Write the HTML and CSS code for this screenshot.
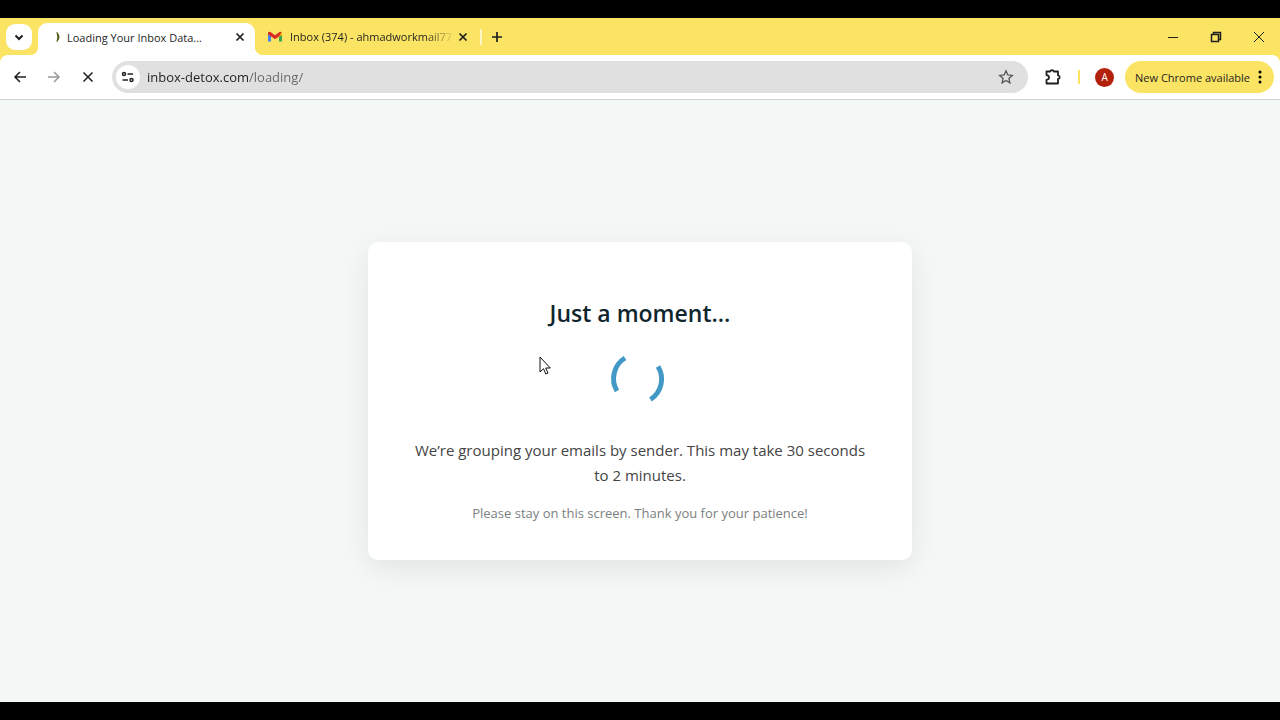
FILE: index.html
```html
<!DOCTYPE html>
<html lang="en">

<head>
    <meta charset="UTF-8">
    <meta name="viewport" content="width=device-width, initial-scale=1.0">
    <title>Loading Your Inbox Data...</title>
    <link rel="stylesheet" href="styles.css">
</head>

<body>
    <header class="browser">
        <div class="tab-strip">
            <button class="tab-search" aria-label="Search tabs">
                <svg width="10" height="10" viewBox="0 0 10 10"><path d="M1.5 3.5 5 7l3.500-3.500" class="line bold"/></svg>
            </button>

            <div class="tab active">
                <svg class="favicon" width="16" height="16" viewBox="0 0 16 16"><path d="M9 3.500Q13 8 9 12.500Q10.800 8 9 3.500Z" fill="#4d5a10" stroke="#4d5a10"/></svg>
                <span class="tab-title">Loading Your Inbox Data...</span>
                <button class="tab-close" aria-label="Close tab">
                    <svg width="10" height="10" viewBox="0 0 10 10"><path d="M1.500 1.500l7 7M8.500 1.500l-7 7" class="line close"/></svg>
                </button>
            </div>

            <div class="tab">
                <svg class="favicon gmail" width="14" height="12" viewBox="0 0 14 12">
                    <path d="M0 2v8.500h3V4z" fill="#4285f4"/>
                    <path d="M14 2v8.500h-3V4z" fill="#34a853"/>
                    <path d="M11 1.500 14 1v3l-3 2z" fill="#fbbc04"/>
                    <path d="M0 1.500Q1 .3 2.500 1L7 4.300 11.500 1Q13 .3 13.500 1.500L11 5.500 7 8.300 3 5.500 0 3.500z" fill="#d93025"/>
                </svg>
                <span class="tab-title faded">Inbox (374) - ahmadworkmail77</span>
                <button class="tab-close" aria-label="Close tab">
                    <svg width="10" height="10" viewBox="0 0 10 10"><path d="M1.500 1.500l7 7M8.500 1.500l-7 7" class="line close"/></svg>
                </button>
            </div>

            <span class="tab-divider"></span>
            <button class="new-tab" aria-label="New tab">
                <svg width="12" height="12" viewBox="0 0 12 12"><path d="M6 1v10M1 6h10" class="line close"/></svg>
            </button>

            <div class="window-controls">
                <button aria-label="Minimize"><svg width="12" height="12" viewBox="0 0 12 12"><path d="M1 6.500h10" class="line thin"/></svg></button>
                <button aria-label="Restore"><svg width="12" height="12" viewBox="0 0 12 12"><path d="M1.500 3.500h7v7h-7zM3.500 3.500V1.500h7v7h-2" class="line"/></svg></button>
                <button aria-label="Close window"><svg width="12" height="12" viewBox="0 0 12 12"><path d="M1 1l10 10M11 1 1 11" class="line thin"/></svg></button>
            </div>
        </div>

        <div class="toolbar">
            <div class="nav-buttons">
                <button aria-label="Back"><svg width="16" height="16" viewBox="0 0 16 16"><path d="M14 8H3M8 3 3 8l5 5" class="line"/></svg></button>
                <button aria-label="Forward" disabled><svg width="16" height="16" viewBox="0 0 16 16"><path d="M2 8h11M8 3l5 5-5 5" class="line"/></svg></button>
                <button aria-label="Stop"><svg width="16" height="16" viewBox="0 0 16 16"><path d="M3.500 3.500l9 9M12.500 3.500l-9 9" class="line"/></svg></button>
            </div>

            <div class="address-bar">
                <button class="site-info" aria-label="View site information">
                    <svg width="14" height="12" viewBox="0 0 14 12"><circle cx="3" cy="3" r="1.500" class="line"/><path d="M6.500 3h5.500M1.500 9h5.500" class="line"/><circle cx="10.500" cy="9" r="1.500" class="line"/></svg>
                </button>
                <input class="url" type="text" value="inbox-detox.com/loading/" aria-label="Address">
                <button class="bookmark" aria-label="Bookmark this tab">
                    <svg width="16" height="16" viewBox="0 0 16 16"><path d="M8 1.800 9.800 6l4.500.4-3.400 3 1 4.400L8 11.500l-3.900 2.300 1-4.400-3.400-3L6.200 6z" fill="none" stroke="#555" stroke-width="1.300"/></svg>
                </button>
            </div>

            <button class="extensions" aria-label="Extensions">
                <svg width="18" height="18" viewBox="0 0 18 18"><path d="M2.500 3.500H6.200Q6.500 2.200 8 2.200T9.800 3.500H14V7.300Q15.700 7.600 15.700 9.200T14 11V15.500H2.500V11.800Q5 11.500 5 9.500T2.500 7.200Z" class="line ext"/></svg>
            </button>
            <span class="toolbar-divider"></span>
            <button class="avatar" aria-label="Profile">A</button>
            <button class="update">
                New Chrome available
                <svg width="4" height="14" viewBox="0 0 4 14"><circle cx="2" cy="2" r="1.500"/><circle cx="2" cy="7" r="1.500"/><circle cx="2" cy="12" r="1.500"/></svg>
            </button>
        </div>
    </header>

    <main class="page">
        <div class="card">
            <h1>Just a moment...</h1>
            <svg class="spinner" width="64" height="64" viewBox="0 0 64 64">
                <path d="M17 10A24.200 24.200 0 0 0 9 43" />
                <path d="M50 18.500A24.200 24.200 0 0 1 42.500 51.500" />
            </svg>
            <p class="message">We’re grouping your emails by sender. This may take 30 seconds to 2 minutes.</p>
            <p class="note">Please stay on this screen. Thank you for your patience!</p>
        </div>
    </main>

    <svg class="cursor" width="12" height="20" viewBox="0 0 12 20"><path d="M1 1v15l3.500-3.300 2.300 5.300 2.200-1-2.300-5H11.300z" fill="#fff" stroke="#111"/></svg>
</body>

</html>
```
FILE: styles.css
```css
* {
    box-sizing: border-box;
}

body {
    margin: 0;
    padding: 18px 0;
    height: 100vh;
    display: flex;
    flex-direction: column;
    background-color: #000;
    font-family: "Open Sans", "Noto Sans", sans-serif;
    color: #1f1f1f;
}

button {
    display: flex;
    align-items: center;
    justify-content: center;
    padding: 0;
    border: none;
    background: none;
    color: inherit;
    font-family: inherit;
    cursor: pointer;
}

svg {
    display: block;
    flex-shrink: 0;
}

.line {
    fill: none;
    stroke: #1f1f1f;
    stroke-width: 1.5;
}

.bold {
    stroke-width: 2;
}

.close {
    stroke-width: 1.7;
}

.ext {
    stroke-width: 1.8;
    stroke-linejoin: round;
}

.thin {
    stroke-width: 1;
}

/* tabs */
.browser {
    background-color: #fbe364;
}

.tab-strip {
    display: flex;
    align-items: center;
    height: 37px;
    padding-left: 6px;
}

.tab-search {
    width: 26px;
    height: 26px;
    margin-right: 6px;
    border-radius: 9px;
    background-color: #fff;
}

.tab {
    display: flex;
    align-items: center;
    width: 223px;
    height: 32px;
    padding: 0 7px 0 13px;
    font-size: 11px;
}

.tab.active {
    position: relative;
    align-self: flex-end;
    width: 217px;
    padding: 0 7px 4px 10px;
    border-radius: 9px 9px 0 0;
    background-color: #fff;
}

/* curved feet of the active tab */
.tab.active::before,
.tab.active::after {
    content: "";
    position: absolute;
    bottom: 0;
    width: 8px;
    height: 8px;
}

.tab.active::before {
    left: -8px;
    background: radial-gradient(circle at 0 0, #fbe364 8px, #fff 8px);
}

.tab.active::after {
    right: -8px;
    background: radial-gradient(circle at 8px 0, #fbe364 8px, #fff 8px);
}

.favicon {
    margin-right: 3px;
}

.favicon.gmail {
    margin-right: 8px;
}

.tab-title {
    flex: 1;
    white-space: nowrap;
}

.faded {
    -webkit-mask-image: linear-gradient(to right, #000 82%, transparent);
    mask-image: linear-gradient(to right, #000 82%, transparent);
}

.tab-close {
    width: 16px;
    height: 16px;
}

.tab-divider {
    width: 2px;
    height: 16px;
    margin-left: 2px;
    background-color: #fff6c8;
}

.new-tab {
    width: 30px;
    height: 26px;
}

.window-controls {
    display: flex;
    margin-left: auto;
}

.window-controls button {
    width: 43px;
    height: 37px;
}

/* toolbar */
.toolbar {
    display: flex;
    align-items: center;
    height: 45px;
    padding: 0 6px 0 3px;
    border-bottom: 1px solid #cfd2d2;
    border-radius: 8px 8px 0 0;
    background-color: #fff;
}

.nav-buttons {
    display: flex;
    margin-right: 7px;
}

.nav-buttons button {
    width: 34px;
    height: 32px;
}

.nav-buttons button:disabled {
    opacity: 0.45;
}

.address-bar {
    flex: 1;
    display: flex;
    align-items: center;
    height: 32px;
    padding: 0 14px 0 4px;
    border-radius: 16px;
    background-color: #e0e0e0;
}

.site-info {
    width: 24px;
    height: 24px;
    border-radius: 50%;
    background-color: #fff;
}

/* the domain is darker than the path */
.url {
    flex: 1;
    margin-left: 7px;
    padding: 0;
    border: none;
    outline: none;
    background: linear-gradient(to right, #1f1f1f 102px, #63676b 102px);
    -webkit-background-clip: text;
    background-clip: text;
    color: transparent;
    font-family: inherit;
    font-size: 13px;
}

.extensions {
    width: 50px;
    height: 32px;
}

.toolbar-divider {
    width: 2px;
    height: 14px;
    background-color: #fbe364;
}

.avatar {
    width: 19px;
    height: 19px;
    margin: 0 11px 0 15px;
    border-radius: 50%;
    background-color: #b3200c;
    color: #fff;
    font-size: 10px;
}

.update {
    gap: 8px;
    height: 32px;
    padding: 0 12px 0 10px;
    border-radius: 16px;
    background-color: #fbe364;
    font-size: 11px;
}

/* loading page */
.page {
    flex: 1;
    display: flex;
    align-items: center;
    justify-content: center;
    background-color: #f3f8f7;
}

.card {
    width: 100%;
    max-width: 544px;
    padding: 54px 44px 36px;
    border-radius: 10px;
    background-color: #fff;
    box-shadow: 0 8px 28px rgba(0, 0, 0, 0.08);
    text-align: center;
}

h1 {
    margin: 0;
    color: #10262e;
    font-size: 23px;
    font-weight: 600;
    line-height: 34px;
}

.spinner {
    margin: 18px auto 26px;
    fill: none;
    stroke: #4399c6;
    stroke-width: 5;
}

.message {
    margin: 0 0 14px;
    color: #444;
    font-size: 15px;
    line-height: 25px;
}

.note {
    margin: 0;
    color: #7b8080;
    font-size: 13px;
    line-height: 22px;
}

/* mouse pointer */
.cursor {
    position: absolute;
    left: 539px;
    top: 356px;
}
```
